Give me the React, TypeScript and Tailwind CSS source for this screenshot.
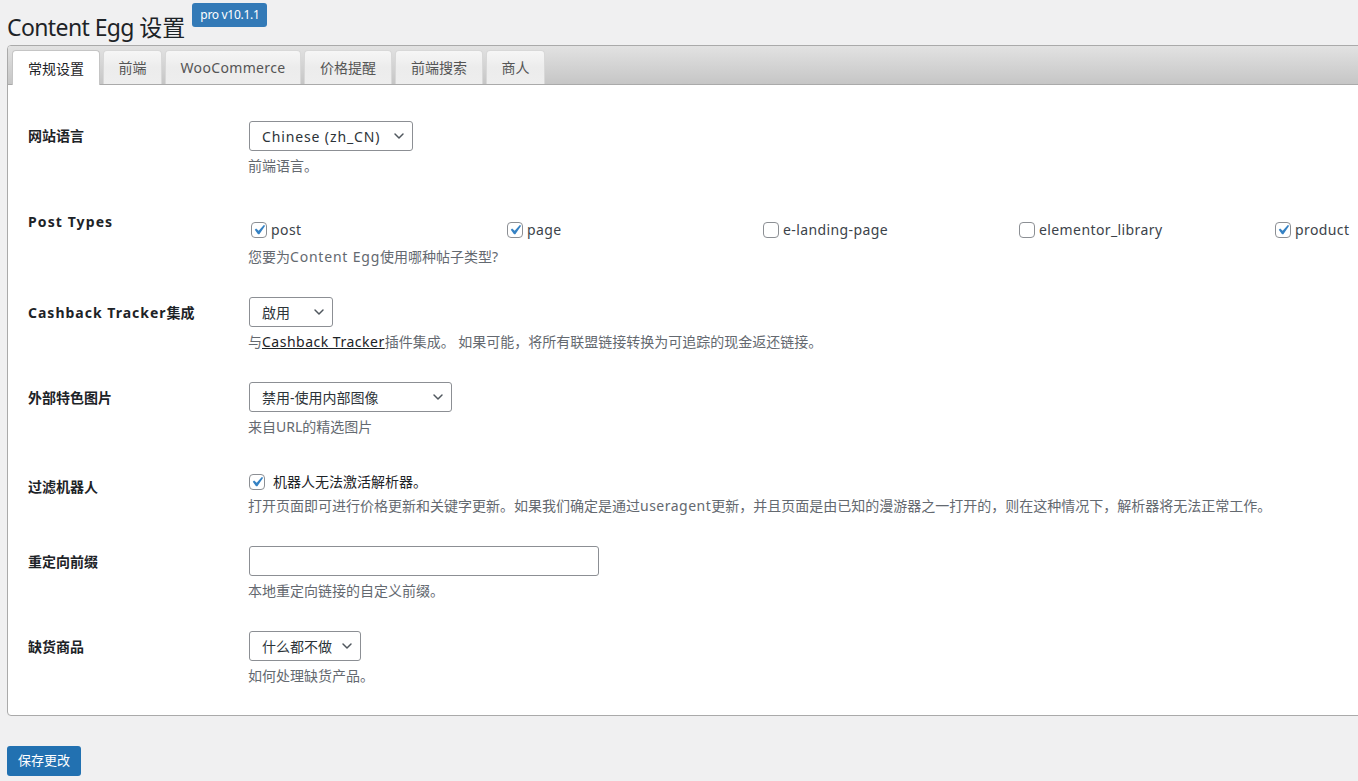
import { ChevronDown } from "lucide-react";

const font = "font-['Noto_Sans','Noto_Sans_CJK_SC',sans-serif]";
const tabs = [
  { name: "常规设置", width: "w-[88px]", active: true },
  { name: "前端", width: "w-[59px]" },
  { name: "WooCommerce", width: "w-[136px]", latin: true },
  { name: "价格提醒", width: "w-[88px]" },
  { name: "前端搜索", width: "w-[88px]" },
  { name: "商人", width: "w-[59px]" },
];

const postTypes = [
  { name: "post", checked: true, width: "w-[256px]" },
  { name: "page", checked: true, width: "w-[256px]" },
  { name: "e-landing-page", checked: false, width: "w-[256px]" },
  { name: "elementor_library", checked: false, width: "w-[256px]" },
  { name: "product", checked: true, width: "w-[100px]" },
];

function Check({ checked }: { checked: boolean }) {
  return (
    <span className="flex h-4 w-4 shrink-0 items-center justify-center rounded-[4px] border border-[#8c8f94] bg-white">
      {checked && (
        <svg viewBox="0 0 20 20" className="h-[20px] w-[20px] shrink-0">
          <path d="M14.83 4.89l1.34.94-5.81 8.38H9.02L5.78 9.67l1.34-1.25 2.57 2.4z" fill="#3582c4" />
        </svg>
      )}
    </span>
  );
}

function Select({ label, width, wide }: { label: string; width: string; wide?: boolean }) {
  return (
    <div className={`flex h-[30px] ${width} items-center justify-between rounded-[3px] border border-[#8c8f94] bg-white pl-3 pr-[5px] text-[14px] text-[#2c3338]`}>
      <span className={`whitespace-nowrap ${wide ? "tracking-[0.87px]" : ""}`}>{label}</span>
      <ChevronDown size={16} strokeWidth={2.2} className="shrink-0 text-[#50575e]" />
    </div>
  );
}

function Row({ label, height, labelTop, children }: { label: React.ReactNode; height: string; labelTop: string; children: React.ReactNode }) {
  return (
    <div className={`flex ${height}`}>
      <div className={`w-[220px] shrink-0 whitespace-nowrap text-[14px] font-bold leading-[20px] text-[#1d2327] ${labelTop}`}>{label}</div>
      <div className="min-w-0 flex-1">{children}</div>
    </div>
  );
}

function Desc({ children, className = "" }: { children: React.ReactNode; className?: string }) {
  return <p className={`whitespace-nowrap text-[14px] leading-[20px] text-[#646970] ${className}`}>{children}</p>;
}

export default function App() {
  return (
    <div className={`h-[781px] w-[1358px] overflow-hidden bg-[#f0f0f1] pl-[7px] ${font}`}>
      <div className="flex h-[45px] items-start">
        <h1 className="mt-[11px] whitespace-nowrap text-[23px] leading-[32px] text-[#1d2327]">
          <span className="tracking-[-0.6px]">Content Egg </span>设置
        </h1>
        <span className="ml-[7px] mt-[3px] rounded-[3px] bg-[#337ab7] px-2 py-[3px] text-[12px] leading-[18px] tracking-[-0.3px] text-white">pro v10.1.1</span>
      </div>

      <div className="h-[671px] w-[1400px] overflow-hidden rounded-[4px] border border-[#aaaaaa] bg-white">
        <div className="flex h-[39px] gap-[3px] border-b border-[#aaaaaa] bg-gradient-to-b from-[#e2e2e2] to-[#c6c6c6] pl-1 pt-1">
          {tabs.map((t) => (
            <div
              key={t.name}
              className={`flex ${t.width} items-center justify-center whitespace-nowrap rounded-t-[4px] border border-b-0 text-[14px] ${t.latin ? "tracking-[0.35px]" : ""} ${
                t.active
                  ? "relative z-10 h-[35px] border-[#c5c5c5] bg-white text-[#1d2327]"
                  : "h-[34px] border-[#d8d8d8] bg-gradient-to-b from-[#f6f6f6] via-[#ececec] to-[#eeeeee] text-[#555555]"
              }`}
            >
              {t.name}
            </div>
          ))}
        </div>

        <div className="pl-5 pt-[21px]">
          <Row label="网站语言" height="h-[85px]" labelTop="pt-[20px]">
            <div className="pt-[15px] pl-px">
              <Select label="Chinese (zh_CN)" width="w-[164px]" wide />
            </div>
            <Desc className="mt-[5px]">前端语言。</Desc>
          </Row>

          <Row label={<span className="tracking-[1.1px]">Post Types</span>} height="h-[91px]" labelTop="pt-[21px]">
            <div className="flex pt-[29px] pl-[3px]">
              {postTypes.map((p) => (
                <label key={p.name} className={`flex ${p.width} shrink-0 items-center gap-[4px] text-[14px] leading-[20px] tracking-[0.4px] text-[#3c434a]`}>
                  <Check checked={p.checked} />
                  {p.name}
                </label>
              ))}
            </div>
            <Desc className="mt-[7px]">
              您要为<span className="tracking-[0.8px]">Content Egg</span>使用哪种帖子类型?
            </Desc>
          </Row>

          <Row label={<><span className="tracking-[1px]">Cashback Tracker</span>集成</>} height="h-[85px]" labelTop="pt-[21px]">
            <div className="pt-[15px] pl-px">
              <Select label="啟用" width="w-[84px]" />
            </div>
            <Desc className="mt-[5px]">
              与<span className="tracking-[0.5px] text-[#1d2327] underline">Cashback Tracker</span>插件集成。 如果可能，将所有联盟链接转换为可追踪的现金返还链接。
            </Desc>
          </Row>

          <Row label="外部特色图片" height="h-[85px]" labelTop="pt-[21px]">
            <div className="pt-[15px] pl-px">
              <Select label="禁用-使用内部图像" width="w-[203px]" />
            </div>
            <Desc className="mt-[5px]">来自URL的精选图片</Desc>
          </Row>

          <Row label="过滤机器人" height="h-[79px]" labelTop="pt-[25px]">
            <label className="flex items-center gap-[8px] pl-px pt-[20px] text-[14px] leading-[20px] text-[#1d2327]">
              <Check checked />
              机器人无法激活解析器。
            </label>
            <Desc className="mt-[4px]">
              打开页面即可进行价格更新和关键字更新。如果我们确定是通过<span className="tracking-[0.5px]">useragent</span>更新，并且页面是由已知的漫游器之一打开的，则在这种情况下，解析器将无法正常工作。
            </Desc>
          </Row>

          <Row label="重定向前缀" height="h-[85px]" labelTop="pt-[21px]">
            <div className="pt-[15px] pl-px">
              <div className="h-[30px] w-[350px] rounded-[3px] border border-[#8c8f94] bg-white" />
            </div>
            <Desc className="mt-[5px]">本地重定向链接的自定义前缀。</Desc>
          </Row>

          <Row label="缺货商品" height="h-[85px]" labelTop="pt-[21px]">
            <div className="pt-[15px] pl-px">
              <Select label="什么都不做" width="w-[112px]" />
            </div>
            <Desc className="mt-[5px]">如何处理缺货产品。</Desc>
          </Row>
        </div>
      </div>

      <button className="mt-[30px] flex h-[30px] w-[74px] items-center justify-center rounded-[3px] bg-[#2271b1] text-[13px] text-white">保存更改</button>
    </div>
  );
}
